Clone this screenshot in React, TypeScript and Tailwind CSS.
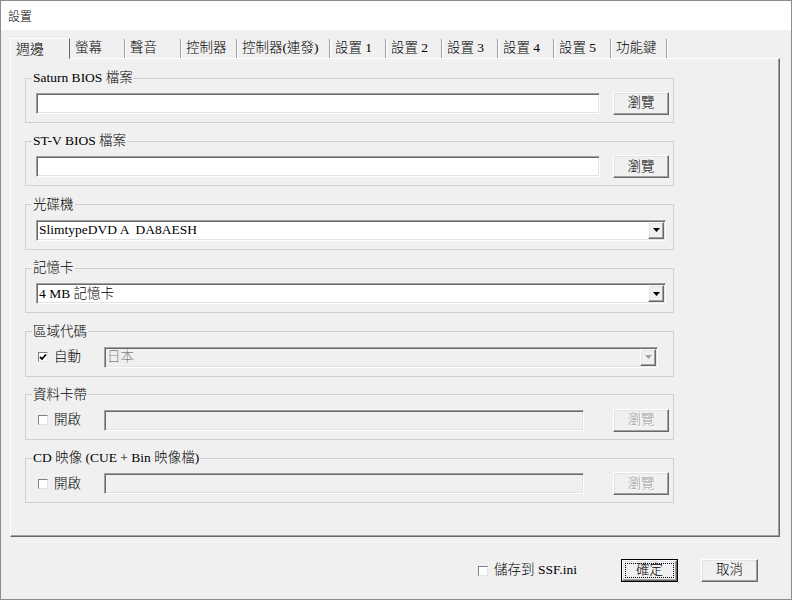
import React from 'react';

type Tab = { label: string; cls: string; selected?: boolean };

const tabs: Tab[] = [
  { label: '週邊', cls: 'w-[60px]', selected: true },
  { label: '螢幕', cls: 'w-[55px]' },
  { label: '聲音', cls: 'w-[56px]' },
  { label: '控制器', cls: 'w-[56px]' },
  { label: '控制器(連發)', cls: 'w-[93px]' },
  { label: '設置 1', cls: 'w-[56px]' },
  { label: '設置 2', cls: 'w-[56px]' },
  { label: '設置 3', cls: 'w-[56px]' },
  { label: '設置 4', cls: 'w-[56px]' },
  { label: '設置 5', cls: 'w-[57px]' },
  { label: '功能鍵', cls: 'w-[56px]' },
];

const raised =
  'bg-[#f0f0f0] border border-t-white border-l-white border-r-[#696969] border-b-[#696969] shadow-[inset_-1px_-1px_0_#a0a0a0,inset_1px_1px_0_#e3e3e3]';
const sunken =
  'border border-t-[#a0a0a0] border-l-[#a0a0a0] border-r-white border-b-white shadow-[inset_1px_1px_0_#696969,inset_-1px_-1px_0_#e3e3e3]';

function Button({ label, disabled }: { label: string; disabled?: boolean }) {
  return (
    <div
      className={`${raised} w-[56px] h-[23px] flex items-center justify-center ${
        disabled ? 'text-[#a0a0a0] [text-shadow:1px_1px_0_#fff]' : 'text-black'
      }`}
    >
      {label}
    </div>
  );
}

function TextField({ w, disabled }: { w: string; disabled?: boolean }) {
  return <div className={`${sunken} ${w} h-[21px] ${disabled ? 'bg-[#f0f0f0]' : 'bg-white'}`} />;
}

function Combo({ value, w, disabled }: { value: string; w: string; disabled?: boolean }) {
  return (
    <div className={`${sunken} ${w} h-[21px] flex items-stretch p-[1px] ${disabled ? 'bg-[#f0f0f0]' : 'bg-white'}`}>
      <div className={`flex-1 flex items-center pl-[1px] whitespace-pre ${disabled ? 'text-[#808080]' : 'text-black'}`}>
        {value}
      </div>
      <div className={`${raised} w-[16px] flex items-center justify-center`}>
        <svg width="7" height="4" viewBox="0 0 7 4">
          <polygon points="0,0 7,0 3.5,4" fill={disabled ? '#a0a0a0' : '#000'} />
        </svg>
      </div>
    </div>
  );
}

function Check({ checked }: { checked?: boolean }) {
  return (
    <div className="w-[10px] h-[10px] bg-white border border-t-[#808080] border-l-[#808080] border-r-[#e3e3e3] border-b-[#e3e3e3] flex items-center justify-center">
      {checked && (
        <svg width="8" height="8" viewBox="0 0 8 8">
          <polyline points="1,4 3,6 7,1.5" fill="none" stroke="#000" strokeWidth="1.8" />
        </svg>
      )}
    </div>
  );
}

function Group({ title, children }: { title: string; children: React.ReactNode }) {
  return (
    <fieldset className="w-[649px] border border-[#d0d0d0] pl-[10px] pt-[6px] pb-[7px]">
      <legend className="-ml-[4px] px-[1px] leading-[16px]">{title}</legend>
      <div className="h-[23px] flex items-center">{children}</div>
    </fieldset>
  );
}

function Toggle({ label, checked }: { label: string; checked?: boolean }) {
  return (
    <div className="w-[68px] flex items-center pl-[2px] gap-[6px]">
      <Check checked={checked} />
      <span>{label}</span>
    </div>
  );
}

export default function App() {
  return (
    <div className="w-[792px] h-[600px] border border-[#8c8c8c] flex flex-col bg-white font-['Liberation_Serif','Noto_Sans_CJK_TC',serif] font-light text-[13.5px] text-black">
      {/* title bar */}
      <div className="h-[29px] flex items-center pl-[7px] text-[12px] font-['Noto_Sans_CJK_TC',sans-serif]">設置</div>

      <div className="flex-1 bg-[#f0f0f0] flex flex-col pl-[9px] pr-[11px] pt-[8px]">
        {/* tabs */}
        <div className="h-[20px] flex items-end">
          {tabs.map((t) =>
            t.selected ? (
              <div
                key={t.label}
                className={`${t.cls} h-[21px] -mb-[1px] relative z-10 bg-[#f0f0f0] border-t border-l border-white border-r border-r-[#696969] pl-[5px] flex items-center text-[14px] whitespace-nowrap`}
              >
                {t.label}
              </div>
            ) : (
              <div
                key={t.label}
                className={`${t.cls} h-[19px] border-r border-[#a0a0a0] shadow-[1px_0_0_#fff] pl-[5px] flex items-center whitespace-nowrap`}
              >
                {t.label}
              </div>
            )
          )}
        </div>

        {/* tab panel */}
        <div className="w-[770px] h-[479px] border border-t-white border-l-white border-r-[#696969] border-b-[#696969] shadow-[inset_-1px_-1px_0_#a0a0a0] pl-[14px] pt-[11px] flex flex-col gap-[10.4px]">
          <Group title="Saturn BIOS 檔案">
            <TextField w="w-[564px]" />
            <div className="ml-[13px]">
              <Button label="瀏覽" />
            </div>
          </Group>
          <Group title="ST-V BIOS 檔案">
            <TextField w="w-[564px]" />
            <div className="ml-[13px]">
              <Button label="瀏覽" />
            </div>
          </Group>
          <Group title="光碟機">
            <Combo value="SlimtypeDVD A  DA8AESH" w="w-[630px]" />
          </Group>
          <Group title="記憶卡">
            <Combo value="4 MB 記憶卡" w="w-[630px]" />
          </Group>
          <Group title="區域代碼">
            <Toggle label="自動" checked />
            <Combo value="日本" w="w-[554px]" disabled />
          </Group>
          <Group title="資料卡帶">
            <Toggle label="開啟" />
            <TextField w="w-[480px]" disabled />
            <div className="ml-[29px]">
              <Button label="瀏覽" disabled />
            </div>
          </Group>
          <Group title="CD 映像 (CUE + Bin 映像檔)">
            <Toggle label="開啟" />
            <TextField w="w-[480px]" disabled />
            <div className="ml-[29px]">
              <Button label="瀏覽" disabled />
            </div>
          </Group>
        </div>

        {/* footer */}
        <div className="mt-[22px] h-[23px] flex items-center justify-end mr-[22px]">
          <Check />
          <span className="ml-[6px] mr-[44px]">儲存到 SSF.ini</span>
          <div className="w-[57px] h-[23px] border border-black flex">
            <div className={`${raised} flex-1 flex p-[2px]`}>
              <div className="flex-1 border border-dotted border-black flex items-center justify-center">確定</div>
            </div>
          </div>
          <div className={`${raised} ml-[23px] w-[57px] h-[23px] flex items-center justify-center`}>取消</div>
        </div>
      </div>
    </div>
  );
}
